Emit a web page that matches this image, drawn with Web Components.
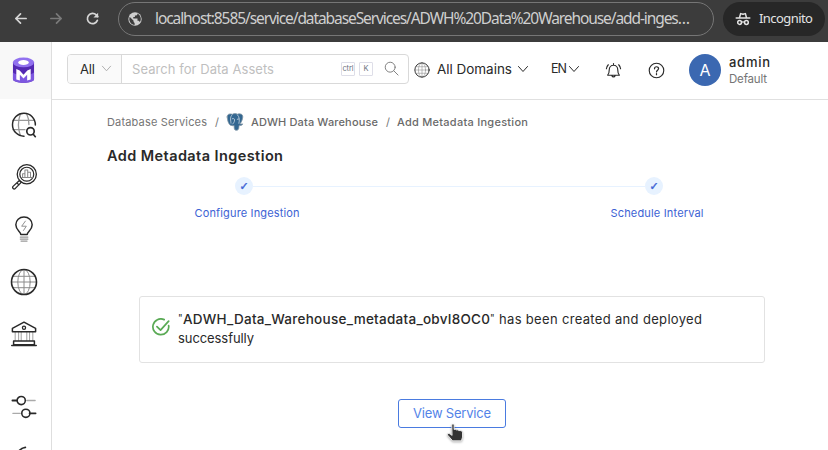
<!DOCTYPE html>
<html lang="en">
<head>
<meta charset="utf-8">
<title>Add Metadata Ingestion</title>
<style>
html,body{margin:0;height:100%;overflow:hidden;background:#fff}
body{font-family:Inter,"Liberation Sans",sans-serif;color:#292929}
</style>
</head>
<body>
<om-app></om-app>
<script>
const define = (name, html, init) => customElements.define(name, class extends HTMLElement {
  connectedCallback() {
    if (this.shadowRoot) return;
    this.attachShadow({mode: 'open'}).innerHTML = html;
    if (init) init.call(this, this.shadowRoot);
  }
});

/* Single line of text tracked to a given width */
customElements.define('fit-text', class extends HTMLElement {
  connectedCallback() {
    if (this.shadowRoot) return;
    this.attachShadow({mode: 'open'}).innerHTML = `<style>:host{display:block;flex:none;white-space:nowrap}span{display:inline-block;white-space:pre}</style><span><slot></slot></span>`;
    const w = +this.getAttribute('w'), s = this.shadowRoot.querySelector('span');
    const n = this.textContent.length;
    this.style.width = w + 'px';
    const nat = s.getBoundingClientRect().width;
    if (nat && n > 1) s.style.letterSpacing = ((w - nat) / (n - 1)).toFixed(3) + 'px';
  }
});

const icons = {
  back: ['0 0 16 16', '<path d="M14 8H3M8 3 3 8l5 5" stroke-width="1.8"/>'],
  forward: ['0 0 16 16', '<path d="M2 8h11M8 3l5 5-5 5" stroke-width="1.8"/>'],
  reload: ['0 0 16 16', '<path d="M13.2 10A5.5 5.5 0 1 1 12 4.2L13.7 6" stroke-width="1.8"/><path d="M14 1.800v5H9z" fill="currentColor" stroke="none"/>'],
  earth: ['0 0 16 16', '<circle cx="8" cy="8" r="6.700" fill="currentColor" stroke="none"/><path d="M2.600 5.800 6.600 9.800v1.100l1 1v2c-3.200-.2-5.400-3-5.300-5.900zM10.300 2.400v1.300l-1 .9H7.900v1.500H6.300v1.500h4.200v2.200h1.300l1 1.300c1.900-2.700 1.300-6.800-2.500-8.700z" fill="#3c3c3c" stroke="none"/>'],
  incognito: ['0 0 16 16', '<path d="M1.200 7h13.600M4.500 6.800 5.600 2.600l2.400.7 2.400-.7 1.100 4.200" stroke-width="1.500"/><circle cx="4.600" cy="11.500" r="1.900" stroke-width="1.500"/><circle cx="11.400" cy="11.500" r="1.900" stroke-width="1.500"/><path d="M6.500 11.200q1.500-.8 3 0" stroke-width="1.300"/>'],
  chevron: ['0 0 12 12', '<path d="m1.500 3.500 4.500 5 4.500-5"/>'],
  search: ['0 0 16 16', '<circle cx="6.600" cy="6.600" r="5.300"/><path d="m10.500 10.500 4.500 4.500"/>'],
  globe: ['0 0 28 28', '<g stroke="#8c8c8c"><ellipse cx="14" cy="14" rx="6.200" ry="12.500"/><path d="M14 1.500v25M1.500 14h25M3.500 8.300h21M3.500 19.700h21"/></g><circle cx="14" cy="14" r="12.500" stroke-width="1.600"/>'],
  bell: ['0 0 18 18', '<path d="M2.800 14h12.400c-1.500-1.500-1.700-2.700-1.700-5.800 0-2.800-1.800-4.700-4.500-4.700S4.500 5.400 4.500 8.200c0 3.100-.2 4.300-1.700 5.800zM9 3.500V1.700M7.300 14.500a1.800 1.800 0 0 0 3.400 0M3.500 2.900A7 7 0 0 0 1.500 7.200M14.500 2.900a7 7 0 0 1 2 4.300" stroke-width="1.200"/>'],
  help: ['0 0 18 18', '<circle cx="9" cy="9" r="7.700" stroke-width="1.200"/><path d="M6.900 7.200c0-2.900 4.300-2.800 4.300-.2 0 1.600-2.200 1.700-2.200 3.500M9 12.300v1.200" stroke-width="1.300"/>'],
  explore: ['0 0 28 28', '<g stroke="#999" stroke-width="1.400"><path d="M10 2.500Q6 14 10 25M17 2.500q2.500 5 2.300 11M2 9h23M2 19h13"/></g><path d="M14 26A12.300 12.300 0 1 1 26.200 14" stroke-width="1.600"/><circle cx="21" cy="20.800" r="4" stroke-width="1.800"/><path d="m24 24 2.200 2.600" stroke-width="1.800"/>'],
  quality: ['0 0 28 28', '<circle cx="17" cy="11" r="10.300" stroke-width="1.400"/><circle cx="17" cy="11" r="7.500" stroke-width="1.300"/><path d="M12.500 14.500v-4H15v4V6.500h3v8V9h3v5.500M11 14.500h12" stroke="#888" stroke-width="1.100"/><path d="m9 17.800-6.800 6.300c-1.300 1.700.8 3.800 2.500 2.200L11 19.800zM6.500 20.500l2 2" stroke-width="1.400"/>'],
  insight: ['0 0 28 28', '<path d="M10.500 20c0-3-5.300-4.700-5.300-10.500C5.200 4.500 9 1.200 14 1.200s8.800 3.300 8.800 8.300C22.800 15.300 17.500 17 17.500 20z" stroke-width="1.600"/><path d="m15.500 5.500-4 5.500h5l-3 4.500" stroke="#888"/><path d="M10 22.700h8.200M10 24.800h8.200M10.800 27h6.500" stroke="#999" stroke-width="1.300"/>'],
  govern: ['0 0 28 28', '<g stroke="#999"><path d="M4.500 12v9M8.200 12v9M11 12v9M17 12v9M20 12v9M23.500 12v9"/></g><path d="M1.500 11.500V8L14 1.300 26.500 8v3.500zM2.800 21.500h22.400v4.200H2.800zM.8 26.300h26.400" stroke-width="1.600"/><circle cx="14" cy="7.300" r="1.700" stroke-width="1.400"/>'],
  settings: ['0 0 28 28', '<path d="M17 7h9M2 20.800h8" stroke="#aaa" stroke-width="1.400"/><path d="M1.500 7h5M20 20.800h6.500" stroke-width="1.900"/><circle cx="11" cy="7" r="4.400" stroke-width="1.700"/><circle cx="16" cy="20.800" r="4.400" stroke-width="1.700"/>'],
  logout: ['0 0 28 28', '<path d="M15.500 1.500Q8 2.500 5 12" stroke-width="1.800"/>'],
  postgres: ['0 0 18 18', '<path d="M1.200 4C1 .8 4 .5 6.200 1.300 8 .3 10.200.4 11.500 1.200c2.800-1 5.500.1 5.300 2.700-.2 2.400-1.500 5.600-3 7.200l3-.2c-.6 1.500-2.300 1.800-3.700 1.600-.3 2.300 0 4.700-2.600 4.800-2.500.1-2.300-2.300-2.400-4.800-.8.300-2 .3-2.800-.1C2.700 12.300 1.500 7.500 1.200 4z" fill="#336791" stroke="#8295a4" stroke-width=".8"/><path d="M6 1.900C3.500 4.500 4.900 7.200 5 10.200M11.500 1.900c2 1.500 2.200 5.500 1.400 8.400M6.300 5.700c2-.7 2.600.5 2.100 2.500-.3 1.300-1 2-1.700 2.800M12.800 5.900l-1.500.4" stroke="#cbd8e3" stroke-width=".8"/>'],
  success: ['0 0 20 20', '<path d="M18.500 8.500A8.800 8.800 0 1 1 13.500 1.800M5.500 9.500l4 4L18.500 3.500" stroke-width="1.900"/>'],
  logo: ['0 0 24 28', '<path d="M1 5v18c0 5.200 22 5.200 22 0V5z" fill="#5429b3" stroke="none"/><path d="M1 16v7c0 5.200 22 5.200 22 0v-7c-3 4-19 4-22 0z" fill="#7d57e0" stroke="none"/><ellipse cx="12" cy="5.700" rx="11" ry="5.100" fill="#9171ef" stroke="none"/><ellipse cx="12" cy="5.800" rx="5.500" ry="2.600" fill="#fff" stroke="none"/><path d="M4.500 12.500 8 14l4 4.500 4-4.500 3.500-1.500v11l-3.700 1v-6L12 22.500 8.200 18.500v6l-3.700-1z" fill="#fff" stroke="none"/>'],
  pointer: ['0 0 18 20', '<path d="M5.800 2.200c0-1.600 2.300-1.600 2.300 0v4.300c1.300-.5 2.100-.1 2.400.6 1-.5 2-.2 2.300.6 1.600-.6 3.400.2 3.700 1.400v5l-1.100 3.700H6.600l-4.900-5.600c-.8-1.400.8-2.200 2.100-1.400l2 1.400z" fill="#333" stroke="#fff" stroke-width=".8"/>']
};
define('om-icon', `<style>:host{display:block;flex:none}svg{display:block;fill:none;stroke:currentColor;stroke-linecap:round;stroke-linejoin:round}</style><svg></svg>`, function (r) {
  const [vb, body] = icons[this.getAttribute('name')], s = r.querySelector('svg'), size = +this.getAttribute('size');
  s.setAttribute('viewBox', vb);
  const [, , vw, vh] = vb.split(' ').map(Number);
  s.setAttribute('width', size); s.setAttribute('height', size * vh / vw);
  s.innerHTML = body;
});

define('browser-bar', `<style>
:host{display:flex;align-items:center;height:42px;box-sizing:border-box;padding:0 3px 6px 13px;background:#3c3c3c;color:#cfcfcf;font:15.500px "Noto Sans","Open Sans",sans-serif}
.nav{display:flex;gap:21px;width:105px;color:#d6d6d6}.dim{color:#7a7a7a}
.url{display:flex;align-items:center;gap:12px;box-sizing:border-box;width:596px;height:34px;margin-top:1px;padding-left:8px;border:1px solid #767676;border-radius:17px}
.url fit-text{margin-top:-2px}
.inc{display:flex;align-items:center;gap:8px;box-sizing:border-box;width:102px;height:34px;margin:1px 0 0 9px;padding-left:12px;background:#272727;border-radius:17px;font-size:13px;color:#e3e3e3}
.inc fit-text{margin-top:-2px}
</style><div class="nav"><om-icon name="back" size="15"></om-icon><om-icon class="dim" name="forward" size="15"></om-icon><om-icon name="reload" size="15"></om-icon></div>
<div class="url"><om-icon name="earth" size="16"></om-icon><fit-text w="535">localhost:8585/service/databaseServices/ADWH%20Data%20Warehouse/add-inges…</fit-text></div>
<div class="inc"><om-icon name="incognito" size="16"></om-icon><fit-text w="54">Incognito</fit-text></div>`);

define('side-nav', `<style>
:host{display:flex;flex-direction:column;align-items:center;box-sizing:border-box;width:52px;flex:none;padding-right:3px;border-right:1px solid #dedede;overflow:hidden;color:#292929}
.logo{display:flex;align-items:center;justify-content:center;flex:none;width:54px;height:57px;background:#f8f8f8;margin-right:-3px;padding-right:5px;box-sizing:border-box}
nav{display:flex;flex-direction:column;align-items:center;gap:26px;padding-top:13px}
.gap{margin-top:21px}
</style><div class="logo"><om-icon name="logo" size="23"></om-icon></div>
<nav><om-icon name="explore" size="26"></om-icon><om-icon name="quality" size="26"></om-icon><om-icon name="insight" size="26"></om-icon><om-icon name="globe" size="28"></om-icon><om-icon name="govern" size="26" style="margin-top:-1px"></om-icon><om-icon class="gap" name="settings" size="26"></om-icon><om-icon name="logout" size="26"></om-icon></nav>`);

define('search-box', `<style>
:host{display:flex;align-items:center;box-sizing:border-box;width:342px;height:30px;border:1px solid #d9d9d9;border-radius:4px;overflow:hidden;font-size:13px}
.scope{display:flex;align-items:center;gap:6px;box-sizing:border-box;height:100%;width:54px;padding-left:12px;background:#fafafa;border-right:1px solid #d9d9d9}
om-icon{color:#aaa}.q{color:#bfbfbf;width:219px;padding-left:10px;box-sizing:border-box}
kbd{display:flex;align-items:center;justify-content:center;box-sizing:border-box;width:14px;height:14px;margin-right:4px;border:1px solid #dedee8;border-radius:1px;font:7.500px Inter,sans-serif;color:#6b7280}
.mag{margin-left:7px;color:#7a7a7a}
</style><div class="scope"><fit-text w="15">All</fit-text><om-icon name="chevron" size="11"></om-icon></div><div class="q"><fit-text w="142">Search for Data Assets</fit-text></div><kbd><fit-text w="11">ctrl</fit-text></kbd><kbd>K</kbd><om-icon class="mag" name="search" size="15"></om-icon>`);

define('top-bar', `<style>
:host{display:flex;align-items:center;box-sizing:border-box;height:58px;padding:0 0 4px 15px;border-bottom:1px solid #e0e0e0;font-size:13.500px}
.globe{margin:3px 7px 0 5px}.c1{margin:1px 22px 0 5px}.c2{margin:1px 25px 0 1px}.bell{margin:3px 26px 0 0}.help{margin:3px 24px 0 0}
.en{font-size:12.500px}
.av{display:flex;align-items:center;justify-content:center;width:32px;height:32px;margin-top:2px;border-radius:50%;background:#3b68b1;color:#fff;font-size:16px}
.user{display:flex;flex-direction:column;margin:4px 0 0 8px}.n{font-size:13px;font-weight:500;line-height:17px}.r{font-size:11.500px;line-height:16px;color:#757575}
</style><search-box></search-box><om-icon class="globe" name="globe" size="16"></om-icon><fit-text w="75">All Domains</fit-text><om-icon class="c1" name="chevron" size="12"></om-icon><fit-text class="en" w="16">EN</fit-text><om-icon class="c2" name="chevron" size="12"></om-icon><om-icon class="bell" name="bell" size="17"></om-icon><om-icon class="help" name="help" size="17"></om-icon><div class="av">A</div><div class="user"><fit-text class="n" w="41">admin</fit-text><fit-text class="r" w="38">Default</fit-text></div>`);

define('bread-crumb', `<style>:host{display:flex;align-items:center;height:18px;font-size:11px;color:#757575}.b{font-weight:500;color:#6a6a6a}.s{margin:0 8px}om-icon{margin-right:7px}</style>
<fit-text w="100">Database Services</fit-text><span class="s" style="margin-right:7px">/</span><om-icon name="postgres" size="18"></om-icon><fit-text class="b" w="127">ADWH Data Warehouse</fit-text><span class="s" style="margin-right:7px">/</span><fit-text class="b" w="131">Add Metadata Ingestion</fit-text>`);

define('step-item', `<style>:host{display:flex;flex-direction:column;align-items:center;width:110px;flex:none;color:#3c62d4;font-size:11px}
.dot{display:flex;align-items:center;justify-content:center;width:18px;height:18px;border-radius:50%;background:#e7f2ff;font:bold 11px "DejaVu Sans",sans-serif;-webkit-text-stroke:.4px currentColor}
.l{margin-top:10px;line-height:16px;transform:translateX(3px)}</style><div class="dot">✓</div><div class="l"><slot></slot></div>`);
define('step-list', `<style>:host{display:flex;align-items:flex-start;padding:0 55px 0 82px}i{flex:1;height:1px;margin:9px -46px 0;background:#e7f2ff}</style>
<step-item><fit-text w="105">Configure Ingestion</fit-text></step-item><i></i><step-item><fit-text w="93">Schedule Interval</fit-text></step-item>`);

define('success-card', `<style>:host{display:flex;align-items:center;box-sizing:border-box;width:626px;height:67px;padding-left:12px;border:1px solid #e2e2e2;border-radius:3px;font-size:13px}
om-icon{margin:-5px 8px 0 0;color:#5aaa55}.m{color:#292929;line-height:19px;margin-top:-1px}.row{display:flex}.n{font-size:13.500px;font-weight:500}.k{font-size:10px;line-height:17px}.rest{margin-left:4px}</style>
<om-icon name="success" size="18"></om-icon><div class="m"><div class="row"><fit-text class="k" w="5">"</fit-text><fit-text class="n" w="307">ADWH_Data_Warehouse_metadata_obvI8OC0</fit-text><fit-text class="k" w="5">"</fit-text><fit-text class="rest" w="203">has been created and deployed</fit-text></div><fit-text w="76">successfully</fit-text></div>`);

define('view-button', `<style>:host{display:block;position:relative}button{display:flex;align-items:center;justify-content:center;width:108px;height:29px;padding:0 0 2px;border:1px solid #4a7be0;border-radius:3px;background:#fff;color:#5383e8;font:13px Inter,sans-serif}
.cur{position:absolute;left:48px;top:24px;filter:drop-shadow(0 1px 1px #0005)}</style><button><fit-text w="78">View Service</fit-text></button><om-icon class="cur" name="pointer" size="18"></om-icon>`);

define('om-app', `<style>:host{display:flex;flex-direction:column;height:450px;width:828px;overflow:hidden}
.body{display:flex;flex:1;min-height:0}.col{flex:1;min-width:0}
main{padding:13px 64px 0 55px}
h1{margin:16px 0 12px;font-size:14.500px;line-height:18px;font-weight:600}
.center{display:flex;flex-direction:column;align-items:flex-start}
success-card{margin:75px 0 36px 32px}view-button{margin-left:291px}</style>
<browser-bar></browser-bar><div class="body"><side-nav></side-nav><div class="col"><top-bar></top-bar><main>
<bread-crumb></bread-crumb><h1><fit-text w="176">Add Metadata Ingestion</fit-text></h1><step-list></step-list><div class="center"><success-card></success-card><view-button></view-button></div></main></div></div>`);
</script>
</body>
</html>
